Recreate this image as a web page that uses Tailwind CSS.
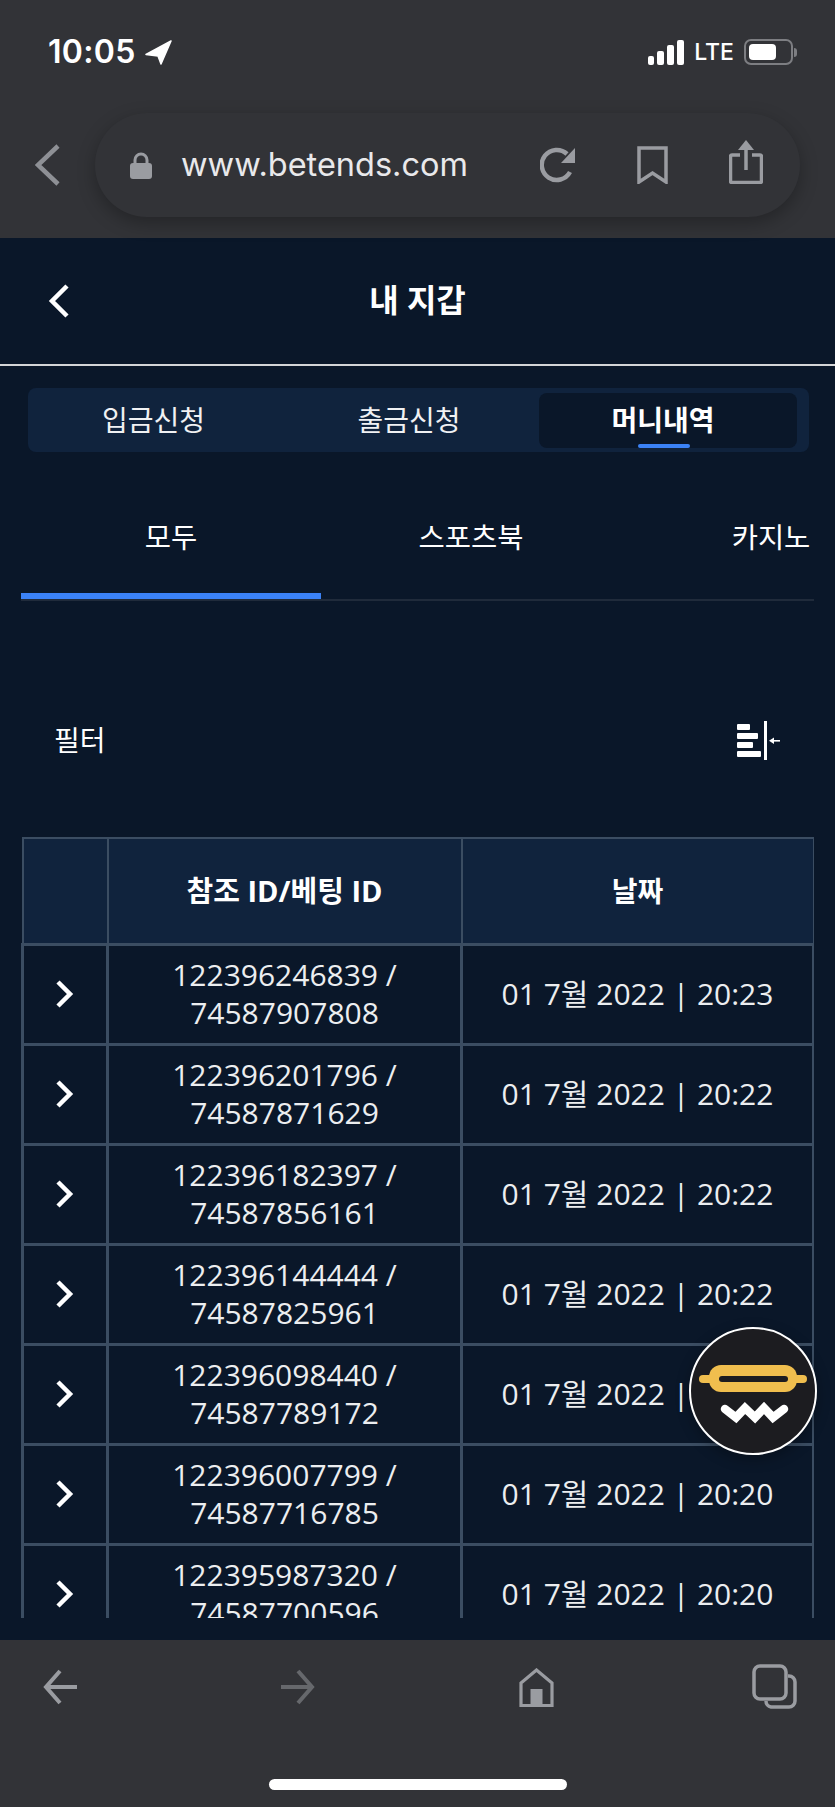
<!DOCTYPE html>
<html lang="ko">
<head>
<meta charset="utf-8">
<script src="https://cdn.jsdelivr.net/npm/@tailwindcss/browser@4"></script>
</head>
<body class="m-0 bg-[#0a1729]">
<div class="w-[835px] h-[1807px] overflow-hidden flex flex-col bg-[#0a1729] text-white font-['Open_Sans','Noto_Sans_CJK_KR',sans-serif]">

  <!-- browser top -->
  <div class="h-[238px] shrink-0 bg-[#323337]">
    <div class="h-[113px] pl-[48px] pr-[38px] pb-[9px] flex items-center justify-between">
      <div class="flex items-center gap-[9px]">
        <span class="font-['Inter',sans-serif] font-semibold text-[32px] leading-none tracking-[0.3px]">10:05</span>
        <svg width="27" height="25" viewBox="0 0 27 25" fill="#fff" stroke="#fff" stroke-width="1.5" stroke-linejoin="round"><path d="M26 1 L1 14.5 L13 16 L16 24 Z"/></svg>
      </div>
      <div class="flex items-center">
        <div class="flex items-end gap-[3px] h-[25px]">
          <div class="w-[6px] h-[9px] bg-white rounded-[2px]"></div>
          <div class="w-[7px] h-[14px] bg-white rounded-[2px]"></div>
          <div class="w-[7px] h-[20px] bg-white rounded-[2px]"></div>
          <div class="w-[7px] h-[25px] bg-white rounded-[2px]"></div>
        </div>
        <span class="ml-[10px] font-['Inter',sans-serif] font-medium text-[23px] leading-none">LTE</span>
        <div class="ml-[10px] flex items-center">
          <div class="w-[49px] h-[26px] shrink-0 rounded-[7px] border-2 border-[#7d7e82] p-[3px]">
            <div class="w-[27px] h-full bg-white rounded-[4px]"></div>
          </div>
          <div class="w-[3px] h-[9px] ml-[1px] shrink-0 bg-[#7d7e82] rounded-r-full"></div>
        </div>
      </div>
    </div>
    <div class="flex items-center pl-[35px]">
      <svg class="shrink-0" width="25" height="42" viewBox="0 0 25 42" fill="none" stroke="#8e9095" stroke-width="4.5"><path d="M23 2 L3 21 L23 40"/></svg>
      <div class="ml-[35px] w-[705px] h-[104px] rounded-full bg-[#323337] shadow-[0_6px_18px_rgba(0,0,0,0.28)] flex items-center pl-[35px] relative">
        <svg class="shrink-0" width="22" height="27" viewBox="0 0 22 27" fill="#9a9ca1"><path d="M5 12 V8 a6 6 0 0 1 12 0 V12" fill="none" stroke="#9a9ca1" stroke-width="3"/><rect x="0" y="11" width="22" height="16" rx="3"/></svg>
        <span class="ml-[29px] font-['Inter',sans-serif] text-[32.5px] leading-none text-[#e9e9eb]">www.betends.com</span>
        <svg class="absolute left-[445px] top-[33px]" width="38" height="38" viewBox="0 0 38 38" fill="none"><path d="M30 26 A15 15 0 1 1 27 8" stroke="#9a9ca1" stroke-width="4.5"/><path d="M35 2 V17 H21 Z" fill="#9a9ca1"/></svg>
        <svg class="absolute left-[542px] top-[33px]" width="31" height="38" viewBox="0 0 31 38" fill="none"><path d="M2 2 H29 V36 L15.5 27 L2 36 Z" stroke="#9a9ca1" stroke-width="3.5"/></svg>
        <svg class="absolute left-[634px] top-[27px]" width="34" height="44" viewBox="0 0 34 44" fill="none"><path d="M11 15 H3 a1.5 1.5 0 0 0 -1.5 1.5 V41 a1.5 1.5 0 0 0 1.5 1.5 H31 a1.5 1.5 0 0 0 1.5 -1.5 V16.5 a1.5 1.5 0 0 0 -1.5 -1.5 H23" stroke="#9a9ca1" stroke-width="3.5"/><path d="M17 30 V4" stroke="#9a9ca1" stroke-width="3.5"/><path d="M17 0 L25 10 H9 Z" fill="#9a9ca1"/></svg>
      </div>
    </div>
  </div>

  <!-- page header -->
  <div class="h-[126px] shrink-0 relative flex items-center justify-center">
    <svg class="absolute left-[48px] top-[46px]" width="22" height="34" viewBox="0 0 22 34" fill="none" stroke="#fff" stroke-width="4.5"><path d="M19 2 L4 17 L19 32"/></svg>
    <span class="font-bold text-[32px] leading-none relative top-[-1px]">내 지갑</span>
  </div>
  <div class="h-[2px] shrink-0 bg-[#d4d5d7]"></div>

  <!-- wallet tabs -->
  <div class="mt-[22px] ml-[28px] w-[781px] h-[64px] shrink-0 rounded-[8px] bg-[#10233d] flex items-center">
    <div class="w-[251px] text-center text-[28px] leading-none text-[#f0f1f3]">입금신청</div>
    <div class="w-[260px] text-center text-[28px] leading-none text-[#f0f1f3]">출금신청</div>
    <div class="w-[258px] h-[55px] rounded-[8px] bg-[#0a1729] relative flex items-center justify-center pr-[10px] font-bold text-[28px] leading-none">
      머니내역
      <div class="absolute bottom-0 left-[99px] w-[52px] h-[4px] rounded-full bg-[#3b82f6]"></div>
    </div>
  </div>

  <!-- category tabs -->
  <div class="mt-[51px] mx-[21px] h-[98px] shrink-0 flex overflow-hidden border-b-2 border-[#202b3b]">
    <div class="w-[300px] shrink-0 text-center text-[28.5px] leading-[68px] h-[96px] border-b-[6px] border-[#3b82f6]">모두</div>
    <div class="w-[300px] shrink-0 text-center text-[28.5px] leading-[68px]">스포츠북</div>
    <div class="w-[300px] shrink-0 text-center text-[28.5px] leading-[68px]">카지노</div>
  </div>

  <!-- filter -->
  <div class="mt-[119px] ml-[54px] mr-[55px] h-[40px] shrink-0 flex items-center justify-between">
    <span class="text-[28px] leading-none">필터</span>
    <svg width="43" height="39" viewBox="0 0 43 39" fill="#fff">
      <rect x="0" y="3" width="13" height="6" rx="1"/>
      <rect x="0" y="12" width="21" height="6" rx="1"/>
      <rect x="0" y="21" width="16" height="6" rx="1"/>
      <rect x="0" y="30" width="24" height="6" rx="1"/>
      <rect x="27" y="0" width="3" height="39"/>
      <rect x="35" y="19" width="8" height="1.6"/>
      <path d="M32 19.8 L37 16.5 V23 Z"/>
    </svg>
  </div>

  <!-- table -->
  <div class="mt-[77px] mx-[21px] h-[781px] shrink-0 overflow-hidden">
    <table class="w-[791px] table-fixed border-collapse text-center">
      <colgroup><col class="w-[85px]"><col class="w-[354px]"><col class="w-[352px]"></colgroup>
      <thead class="bg-[#10233d]">
        <tr class="h-[106px]">
          <th class="border-2 border-[#3b4d62]"></th>
          <th class="border-2 border-[#3b4d62] text-[29px] font-bold">참조 ID/베팅 ID</th>
          <th class="border-2 border-[#3b4d62] text-[28px] font-bold">날짜</th>
        </tr>
      </thead>
      <tbody class="text-[30px] leading-[38px] text-[#eceef0]">
        <tr class="h-[100px]">
          <td class="border-[3px] border-[#3b4d62]"><svg class="mx-auto" width="18" height="28" viewBox="0 0 18 28" fill="none" stroke="#fff" stroke-width="4.5"><path d="M2 2 L14 14 L2 26"/></svg></td>
          <td class="border-[3px] border-[#3b4d62]">122396246839 /<br>74587907808</td>
          <td class="border-[3px] border-[#3b4d62]">01 7월 2022 | 20:23</td>
        </tr>
        <tr class="h-[100px]">
          <td class="border-[3px] border-[#3b4d62]"><svg class="mx-auto" width="18" height="28" viewBox="0 0 18 28" fill="none" stroke="#fff" stroke-width="4.5"><path d="M2 2 L14 14 L2 26"/></svg></td>
          <td class="border-[3px] border-[#3b4d62]">122396201796 /<br>74587871629</td>
          <td class="border-[3px] border-[#3b4d62]">01 7월 2022 | 20:22</td>
        </tr>
        <tr class="h-[100px]">
          <td class="border-[3px] border-[#3b4d62]"><svg class="mx-auto" width="18" height="28" viewBox="0 0 18 28" fill="none" stroke="#fff" stroke-width="4.5"><path d="M2 2 L14 14 L2 26"/></svg></td>
          <td class="border-[3px] border-[#3b4d62]">122396182397 /<br>74587856161</td>
          <td class="border-[3px] border-[#3b4d62]">01 7월 2022 | 20:22</td>
        </tr>
        <tr class="h-[100px]">
          <td class="border-[3px] border-[#3b4d62]"><svg class="mx-auto" width="18" height="28" viewBox="0 0 18 28" fill="none" stroke="#fff" stroke-width="4.5"><path d="M2 2 L14 14 L2 26"/></svg></td>
          <td class="border-[3px] border-[#3b4d62]">122396144444 /<br>74587825961</td>
          <td class="border-[3px] border-[#3b4d62]">01 7월 2022 | 20:22</td>
        </tr>
        <tr class="h-[100px]">
          <td class="border-[3px] border-[#3b4d62]"><svg class="mx-auto" width="18" height="28" viewBox="0 0 18 28" fill="none" stroke="#fff" stroke-width="4.5"><path d="M2 2 L14 14 L2 26"/></svg></td>
          <td class="border-[3px] border-[#3b4d62]">122396098440 /<br>74587789172</td>
          <td class="border-[3px] border-[#3b4d62]">01 7월 2022 | 20:22</td>
        </tr>
        <tr class="h-[100px]">
          <td class="border-[3px] border-[#3b4d62]"><svg class="mx-auto" width="18" height="28" viewBox="0 0 18 28" fill="none" stroke="#fff" stroke-width="4.5"><path d="M2 2 L14 14 L2 26"/></svg></td>
          <td class="border-[3px] border-[#3b4d62]">122396007799 /<br>74587716785</td>
          <td class="border-[3px] border-[#3b4d62]">01 7월 2022 | 20:20</td>
        </tr>
        <tr class="h-[100px]">
          <td class="border-[3px] border-[#3b4d62]"><svg class="mx-auto" width="18" height="28" viewBox="0 0 18 28" fill="none" stroke="#fff" stroke-width="4.5"><path d="M2 2 L14 14 L2 26"/></svg></td>
          <td class="border-[3px] border-[#3b4d62]">122395987320 /<br>74587700596</td>
          <td class="border-[3px] border-[#3b4d62]">01 7월 2022 | 20:20</td>
        </tr>
      </tbody>
    </table>
  </div>

  <!-- browser bottom -->
  <div class="mt-[22px] flex-1 bg-[#323337] relative">
    <div class="h-[94px] flex items-center pl-[43px]">
      <svg class="shrink-0" width="34" height="36" viewBox="0 0 34 36" fill="none" stroke="#9a9ca1" stroke-width="4"><path d="M34 18 H4 M17 2 L3 18 L17 34"/></svg>
      <svg class="shrink-0 ml-[204px]" width="34" height="36" viewBox="0 0 34 36" fill="none" stroke="#66686c" stroke-width="4"><path d="M0 18 H30 M17 2 L31 18 L17 34"/></svg>
      <svg class="shrink-0 ml-[204px]" width="35" height="39" viewBox="0 0 35 39" fill="none"><path d="M2 37.5 V15 L17.5 2 L33 15 V37.5 Z" stroke="#9a9ca1" stroke-width="3.2"/><rect x="11.5" y="21" width="12" height="17" fill="#9a9ca1"/></svg>
      <svg class="shrink-0 ml-[198px]" width="46" height="46" viewBox="0 0 46 46" fill="none" stroke="#9a9ca1" stroke-width="3.5"><rect x="2" y="2" width="32" height="33" rx="6"/><path d="M36 12 h1 a6 6 0 0 1 6 6 V37 a6 6 0 0 1 -6 6 H19 a6 6 0 0 1 -5 -6"/></svg>
    </div>
    <div class="absolute left-[269px] top-[139px] w-[298px] h-[11px] rounded-full bg-white"></div>
  </div>
</div>

<!-- floating chat button -->
<div class="absolute left-[689px] top-[1327px] w-[128px] h-[128px] rounded-full bg-[#1c1c20] border-2 border-white shadow-[0_4px_14px_rgba(0,0,0,0.3)] flex items-center justify-center">
  <svg width="124" height="124" viewBox="2 2 124 124" fill="none">
    <path d="M14 52 H114" stroke="#f0be4e" stroke-width="8" stroke-linecap="round"/>
    <rect x="20" y="38" width="88" height="27" rx="12" fill="#f0be4e"/>
    <rect x="30" y="49" width="69" height="6" rx="3" fill="#1c1c20"/>
    <path d="M36 82 L47 90.5 L56 81 L66 90.5 L75 81 L84 90.5 L95 82" stroke="#fff" stroke-width="8.5" stroke-linejoin="miter" stroke-linecap="round"/>
  </svg>
</div>
</body>
</html>
